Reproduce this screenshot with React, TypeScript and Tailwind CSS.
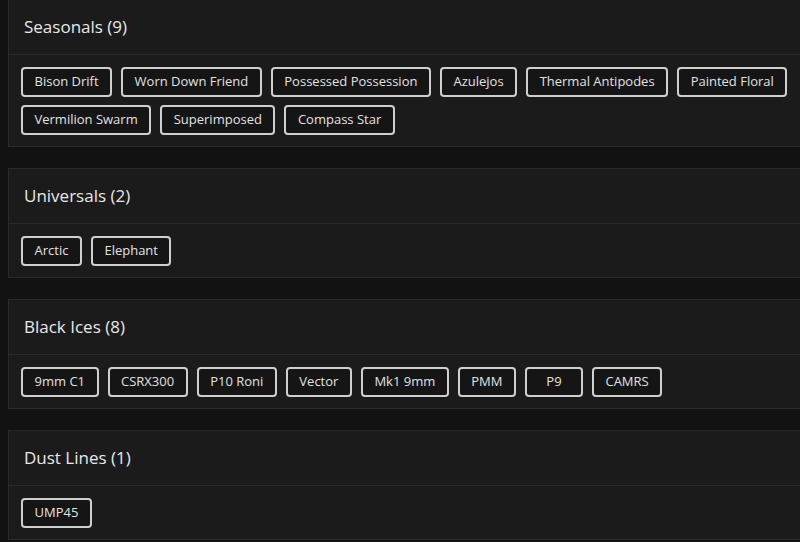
const groups: { title: string; items: string[] }[] = [
  {
    title: "Seasonals (9)",
    items: [
      "Bison Drift",
      "Worn Down Friend",
      "Possessed Possession",
      "Azulejos",
      "Thermal Antipodes",
      "Painted Floral",
      "Vermilion Swarm",
      "Superimposed",
      "Compass Star",
    ],
  },
  { title: "Universals (2)", items: ["Arctic", "Elephant"] },
  {
    title: "Black Ices (8)",
    items: ["9mm C1", "CSRX300", "P10 Roni", "Vector", "Mk1 9mm", "PMM", "P9", "CAMRS"],
  },
  { title: "Dust Lines (1)", items: ["UMP45"] },
];

function Group({ title, items }: { title: string; items: string[] }) {
  return (
    <section className="w-[812px] shrink-0 border border-[#2a2a2a] bg-[#1b1b1b]">
      {/* Header */}
      <div className="flex h-[55px] items-center border-b border-[#2a2a2a] px-[15px]">
        <h2 className="text-[17px] font-medium text-[#e8e8e8]">{title}</h2>
      </div>

      {/* Chips */}
      <div className="flex w-[792px] flex-wrap gap-x-[9px] gap-y-2 px-3 pt-3 pb-[11px]">
        {items.map((item) => (
          <span
            key={item}
            className="flex h-[30px] min-w-[58px] items-center justify-center rounded-[4px] border-2 border-[#cfcfcf] bg-[#151515] px-[11.5px] text-[13px] text-[#e2e2e2]"
          >
            {item}
          </span>
        ))}
      </div>
    </section>
  );
}

export default function App() {
  return (
    <div
      className="h-[542px] w-[800px] overflow-hidden bg-[#121212] pl-2"
      style={{ fontFamily: '"Open Sans", sans-serif' }}
    >
      <div className="-mt-px flex flex-col gap-[21px]">
        {groups.map((g) => (
          <Group key={g.title} title={g.title} items={g.items} />
        ))}
      </div>
    </div>
  );
}
